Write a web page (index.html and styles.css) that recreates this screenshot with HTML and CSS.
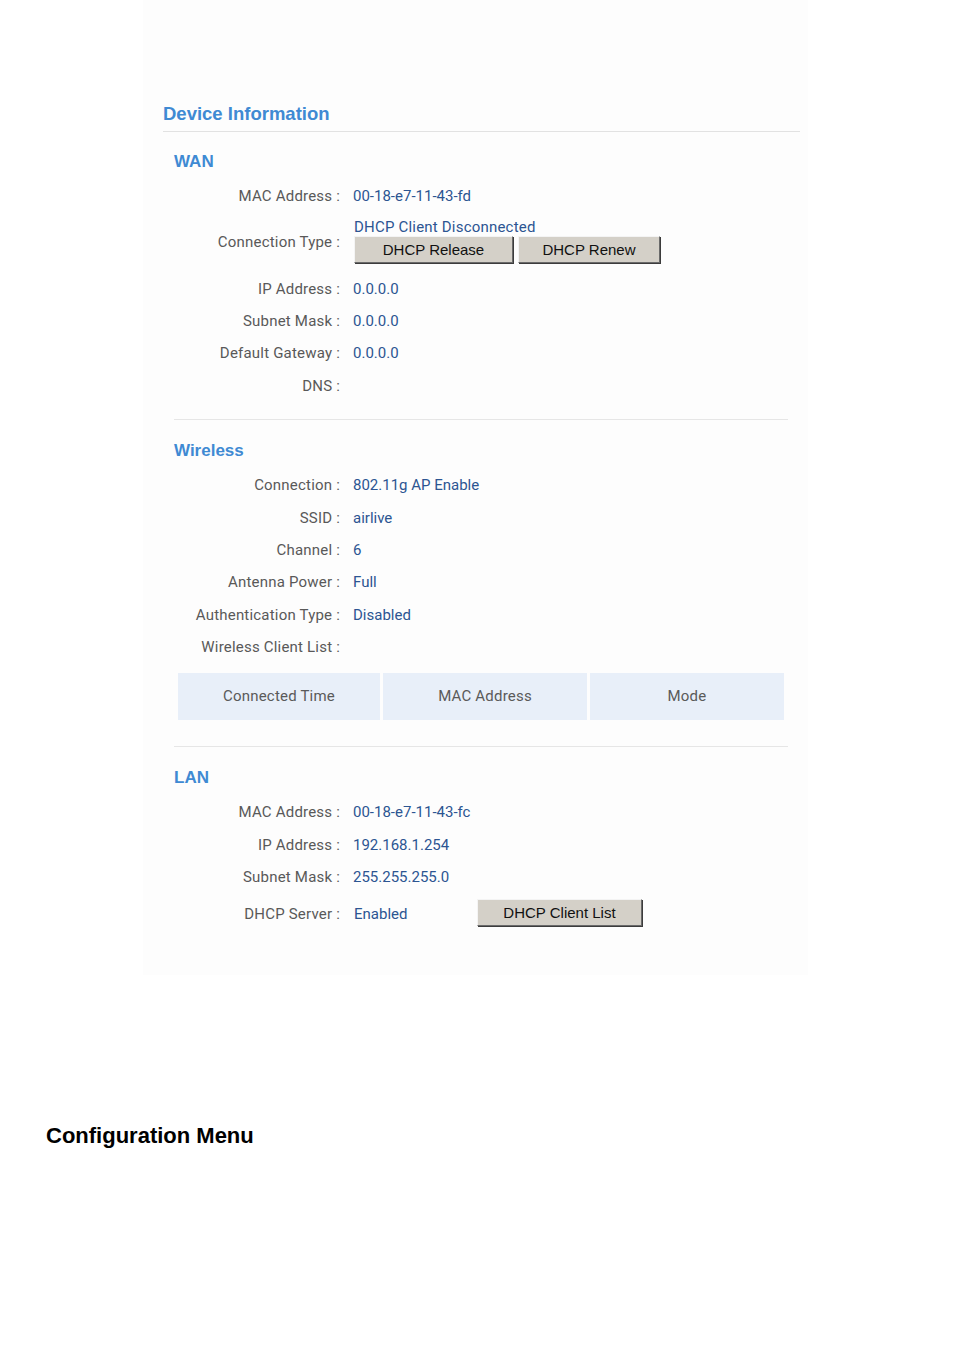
FILE: index.html
```html
<!DOCTYPE html>
<html lang="en">
<head>
    <meta charset="UTF-8">
    <title>Device Information</title>
    <link rel="stylesheet" href="styles.css">
</head>
<body>
<div class="panel">
    <h1 class="page-title">Device Information</h1>

    <div class="section">
        <h2 class="section-title">WAN</h2>
        <div class="rows">
            <div class="row"><span class="label">MAC Address :</span><span class="value">00-18-e7-11-43-fd</span></div>
            <div class="row row-tall">
                <span class="label">Connection Type :</span>
                <div class="value">
                    <div class="value-line">DHCP Client Disconnected</div>
                    <div class="button-group">
                        <button class="btn btn-release">DHCP Release</button>
                        <button class="btn btn-renew">DHCP Renew</button>
                    </div>
                </div>
            </div>
            <div class="row"><span class="label">IP Address :</span><span class="value">0.0.0.0</span></div>
            <div class="row"><span class="label">Subnet Mask :</span><span class="value">0.0.0.0</span></div>
            <div class="row"><span class="label">Default Gateway :</span><span class="value">0.0.0.0</span></div>
            <div class="row"><span class="label">DNS :</span><span class="value"></span></div>
        </div>
    </div>

    <div class="section">
        <h2 class="section-title">Wireless</h2>
        <div class="rows">
            <div class="row"><span class="label">Connection :</span><span class="value">802.11g AP Enable</span></div>
            <div class="row"><span class="label">SSID :</span><span class="value">airlive</span></div>
            <div class="row"><span class="label">Channel :</span><span class="value">6</span></div>
            <div class="row"><span class="label">Antenna Power :</span><span class="value">Full</span></div>
            <div class="row"><span class="label">Authentication Type :</span><span class="value">Disabled</span></div>
            <div class="row"><span class="label">Wireless Client List :</span><span class="value"></span></div>
        </div>
        <div class="client-table">
            <div class="cell">Connected Time</div>
            <div class="cell">MAC Address</div>
            <div class="cell">Mode</div>
        </div>
    </div>

    <div class="section">
        <h2 class="section-title">LAN</h2>
        <div class="rows">
            <div class="row"><span class="label">MAC Address :</span><span class="value">00-18-e7-11-43-fc</span></div>
            <div class="row"><span class="label">IP Address :</span><span class="value">192.168.1.254</span></div>
            <div class="row"><span class="label">Subnet Mask :</span><span class="value">255.255.255.0</span></div>
            <div class="row row-button">
                <span class="label">DHCP Server :</span>
                <div class="value value-inline">
                    <span class="status">Enabled</span>
                    <button class="btn btn-list">DHCP Client List</button>
                </div>
            </div>
        </div>
    </div>
</div>

<h2 class="doc-heading">Configuration Menu</h2>
</body>
</html>
```

FILE: styles.css
```css
body {
    margin: 0;
    background: #fff;
    font-family: "Liberation Sans", Arial, sans-serif;
}
.panel {
    margin-left: 143px;
    width: 665px;
    height: 975px;
    padding: 101px 8px 0 20px;
    box-sizing: border-box;
    background: #fdfdfd;
}
.page-title {
    margin: 0;
    height: 26px;
    line-height: 26px;
    font-size: 18.5px;
    font-weight: bold;
    color: #3f8ad3;
    border-bottom: 1px solid #e2e2e2;
    padding-bottom: 4px;
}
.section {
    margin: 0 12px 0 11px;
    padding-top: 18px;
}
.section + .section {
    border-top: 1px solid #e6e6e6;
    padding-top: 19px;
}
.section-title {
    margin: 0;
    height: 24px;
    line-height: 24px;
    font-size: 17px;
    font-weight: bold;
    color: #3f8ad3;
}
.rows {
    margin-top: 6px;
    margin-bottom: 17px;
}
.row {
    display: grid;
    grid-template-columns: 166px 1fr;
    column-gap: 13px;
    align-items: center;
    height: 32.4px;
    font-family: Roboto, "Liberation Sans", sans-serif;
    font-size: 15px;
}
.row-tall {
    height: 60px;
}
.row-button {
    height: 42px;
}
.label {
    text-align: right;
    color: #595959;
    letter-spacing: 0.2px;
}
.value {
    color: #2c5592;
}
.value-line {
    line-height: 18px;
    margin-top: -4px;
    padding-left: 1px;
    letter-spacing: 0.2px;
}
.button-group {
    display: flex;
    gap: 5px;
    margin-top: 0;
}
.value-inline {
    display: flex;
    align-items: center;
}
.status {
    width: 123px;
    padding-left: 1px;
}
.btn {
    height: 27px;
    padding: 0;
    font-family: "Liberation Sans", Arial, sans-serif;
    font-size: 15px;
    color: #111;
    background: #d4d0c8;
    border: 1px solid;
    border-color: #f4f4f4 #6a6a6a #6a6a6a #f4f4f4;
    box-shadow: 1px 1px 0 #3c3c3c;
}
.btn-release {
    width: 159px;
    margin-left: 1px;
}
.btn-renew {
    width: 142px;
}
.btn-list {
    width: 165px;
    margin-top: -3px;
}
.client-table {
    display: grid;
    grid-template-columns: 202px 204px 1fr;
    column-gap: 3px;
    margin: -7px 4px 26px 4px;
}
.cell {
    height: 47px;
    line-height: 47px;
    text-align: center;
    background: #e8eff9;
    color: #5a5a5a;
    font-family: Roboto, "Liberation Sans", sans-serif;
    font-size: 15px;
    letter-spacing: 0.2px;
}
.doc-heading {
    margin: 148px 0 0 46px;
    font-size: 22px;
    font-weight: bold;
    color: #000;
}
```
